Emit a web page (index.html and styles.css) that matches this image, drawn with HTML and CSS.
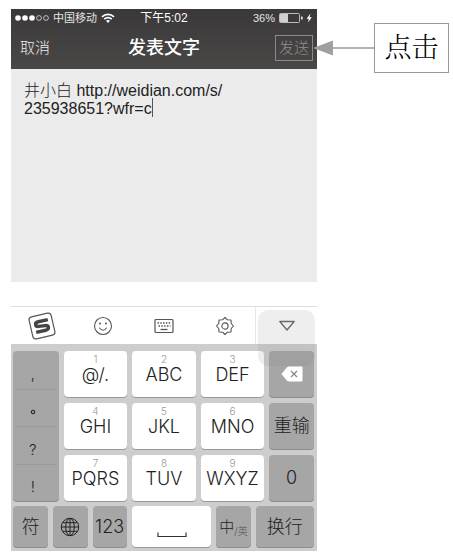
FILE: index.html
```html
<!DOCTYPE html>
<html lang="zh-CN">
<head>
    <meta charset="UTF-8">
    <meta name="viewport" content="width=device-width, initial-scale=1.0">
    <title>发表文字</title>
    <link rel="stylesheet" href="styles.css">
</head>
<body>

<div class="figure">
    <div class="phone">
        <header class="header">
            <!-- Status bar -->
            <div class="status">
                <div class="status-left">
                    <svg class="signal" width="34" height="8" viewBox="0 0 34 8">
                        <g fill="#fff">
                            <circle cx="3" cy="4" r="2.8"/>
                            <circle cx="10" cy="4" r="2.8"/>
                            <circle cx="17" cy="4" r="2.8"/>
                        </g>
                        <g fill="none" stroke="#ddd" stroke-width="0.8">
                            <circle cx="24" cy="4" r="2.4"/>
                            <circle cx="31" cy="4" r="2.4"/>
                        </g>
                    </svg>
                    <span>中国移动</span>
                    <svg width="14" height="10" viewBox="0 0 14 10">
                        <g fill="none" stroke="#fff" stroke-width="1.7">
                            <path d="M1 3.8a8.6 8.6 0 0 1 12 0"/>
                            <path d="M3.3 6.2a5.3 5.3 0 0 1 7.4 0"/>
                        </g>
                        <path d="M5 7.8a3 3 0 0 1 4 0L7 10z" fill="#fff"/>
                    </svg>
                </div>
                <span class="time">下午5:02</span>
                <div class="status-right">
                    <span>36%</span>
                    <svg width="34" height="10" viewBox="0 0 34 10">
                        <rect x="0.5" y="0.5" width="20" height="9" rx="1" fill="none" stroke="#bbb"/>
                        <rect x="1" y="1" width="8" height="8" fill="#d0d0d0"/>
                        <path d="M22 3.2q2 .3 2 1.8t-2 1.8z" fill="#ddd"/>
                        <path d="M31.5 0.5L27.6 5.8h2.2L29 9.5l3.8-5.2h-2.3z" fill="#fff"/>
                    </svg>
                </div>
            </div>
            <!-- Title bar -->
            <div class="nav">
                <button class="cancel" type="button">取消</button>
                <h1>发表文字</h1>
                <button class="send" type="button">发送</button>
            </div>
        </header>

        <div class="editor">
            <textarea class="text" aria-label="发表文字" spellcheck="false">井小白 http://weidian.com/s/
235938651?wfr=c</textarea>
            <span class="caret"></span>
        </div>

        <!-- Input method toolbar -->
        <div class="toolbar">
            <button type="button" aria-label="搜狗">
                <svg width="28" height="28" viewBox="0 0 26 26">
                    <g transform="rotate(-13 13 13)">
                        <rect x="2.5" y="2.5" width="21" height="21" rx="3" fill="#fff" stroke="#555" stroke-width="1.1"/>
                        <path d="M19.6 8.4H10.5C6.6 8.4 6.6 12.4 10 12.7L16 13.3C19.4 13.7 19.4 17.6 15.5 17.6H6.4" fill="none" stroke="#444" stroke-width="3.2"/>
                    </g>
                </svg>
            </button>
            <button type="button" aria-label="表情">
                <svg width="20" height="20" viewBox="0 0 20 20">
                    <circle cx="10" cy="10" r="8.5" fill="none" stroke="#555" stroke-width="1.1"/>
                    <circle cx="7" cy="7.5" r="1" fill="#555"/>
                    <circle cx="13" cy="7.5" r="1" fill="#555"/>
                    <path d="M6.5 12q3.8 4.4 7 0" fill="none" stroke="#555" stroke-width="1.1" stroke-linecap="round"/>
                </svg>
            </button>
            <button type="button" aria-label="键盘">
                <svg width="20" height="16" viewBox="0 0 20 16">
                    <rect x="1" y="1.5" width="18" height="13" rx="1" fill="none" stroke="#555" stroke-width="1.2"/>
                    <path d="M3.5 5h13M4.5 8h12" fill="none" stroke="#555" stroke-width="1.4" stroke-dasharray="1.5 1.3"/>
                    <path d="M6.5 11.5h7" stroke="#555" stroke-width="1.3"/>
                </svg>
            </button>
            <button type="button" aria-label="设置">
                <svg width="20" height="20" viewBox="0 0 20 20">
                    <path d="M10 1.5L12.5 3.8 16 4 16.2 7.5 18.5 10 16.2 12.5 16 16 12.5 16.2 10 18.5 7.5 16.2 4 16 3.8 12.5 1.5 10 3.8 7.5 4 4 7.5 3.8z" fill="none" stroke="#555" stroke-width="1.1" stroke-linejoin="round"/>
                    <circle cx="10" cy="10" r="3.1" fill="none" stroke="#555" stroke-width="1.1"/>
                </svg>
            </button>
            <button class="collapse" type="button" aria-label="收起">
                <svg width="18" height="12" viewBox="0 0 18 12">
                    <path d="M1.8 1.5h14.4L9 10z" fill="none" stroke="#666" stroke-width="1.3" stroke-linejoin="round"/>
                </svg>
            </button>
        </div>

        <!-- Nine-key keyboard -->
        <div class="keyboard">
            <div class="keys">
                <div class="marks">
                    <button type="button">,</button>
                    <button type="button" aria-label="句号">
                        <svg width="6" height="6" viewBox="0 0 6 6"><circle cx="3" cy="3" r="1.7" fill="none" stroke="#222" stroke-width="1.1"/></svg>
                    </button>
                    <button type="button">?</button>
                    <button type="button">!</button>
                </div>
                <button class="key letters" type="button"><small>1</small>@/.</button>
                <button class="key letters" type="button"><small>2</small>ABC</button>
                <button class="key letters" type="button"><small>3</small>DEF</button>
                <button class="key dark" type="button" aria-label="删除">
                    <svg width="22" height="16" viewBox="0 0 22 16">
                        <path d="M0.5 8L6 1.2Q7 .5 8 .5H20.5Q21.5 .5 21.5 1.5V14.5Q21.5 15.5 20.5 15.5H8Q7 15.5 6 14.8z" fill="#fff"/>
                        <path d="M10 5l6 6M16 5l-6 6" stroke="#888" stroke-width="1.3"/>
                    </svg>
                </button>
                <button class="key letters" type="button"><small>4</small>GHI</button>
                <button class="key letters" type="button"><small>5</small>JKL</button>
                <button class="key letters" type="button"><small>6</small>MNO</button>
                <button class="key dark" type="button">重输</button>
                <button class="key letters" type="button"><small>7</small>PQRS</button>
                <button class="key letters" type="button"><small>8</small>TUV</button>
                <button class="key letters" type="button"><small>9</small>WXYZ</button>
                <button class="key dark" type="button">0</button>
            </div>
            <div class="keys-bottom">
                <button class="key dark" type="button">符</button>
                <button class="key dark" type="button" aria-label="切换键盘">
                    <svg width="20" height="20" viewBox="0 0 20 20">
                        <g fill="none" stroke="#222" stroke-width="1">
                            <circle cx="10" cy="10" r="8.7"/>
                            <ellipse cx="10" cy="10" rx="4.3" ry="8.7"/>
                            <path d="M10 1.3v17.4M1.3 10h17.4M2.8 5.7h14.4M2.8 14.3h14.4"/>
                        </g>
                    </svg>
                </button>
                <button class="key dark" type="button">123</button>
                <button class="key space" type="button" aria-label="空格">
                    <svg width="30" height="6" viewBox="0 0 30 6">
                        <path d="M1 0.5v4h28v-4" fill="none" stroke="#333" stroke-width="1.2"/>
                    </svg>
                </button>
                <button class="key dark lang" type="button">中<span>/英</span></button>
                <button class="key dark" type="button">换行</button>
            </div>
        </div>
    </div>

    <!-- Callout that points at the send button -->
    <div class="callout">
        <svg class="arrow" width="61" height="16" viewBox="0 0 61 16">
            <path d="M18 8h43" stroke="#999" stroke-width="1.4"/>
            <path d="M0 8L20 0.5v15z" fill="#a0a0a0"/>
        </svg>
        <div class="callout-label">点击</div>
    </div>
</div>

</body>
</html>
```

FILE: styles.css
```css
* {
    box-sizing: border-box;
}
body {
    margin: 0;
    padding: 9px 4px 9px 11px;
    background-color: #fff;
    font-family: "Liberation Sans", "Noto Sans CJK SC", sans-serif;
}
button {
    margin: 0;
    padding: 0;
    border: none;
    background: none;
    font: inherit;
    color: inherit;
    cursor: pointer;
}
svg {
    display: block;
}
.figure {
    display: flex;
    align-items: flex-start;
}
.phone {
    flex: 1;
    min-width: 0;
}

/* Header */
.header {
    height: 60px;
    background: linear-gradient(#3a3838, #4a4747);
    color: #fff;
}
.status {
    display: grid;
    grid-template-columns: 1fr auto 1fr;
    align-items: center;
    height: 18px;
    padding: 0 4px;
    font-size: 11px;
    line-height: 18px;
}
.status-left,
.status-right {
    display: flex;
    align-items: center;
    gap: 4px;
    color: #e4e4e4;
}
.status-right {
    justify-content: flex-end;
}
.time {
    font-size: 12px;
}
.nav {
    display: grid;
    grid-template-columns: 1fr auto 1fr;
    align-items: center;
    height: 42px;
    padding: 0 4px;
}
.nav h1 {
    margin: 0;
    font-size: 18px;
    font-weight: 500;
    line-height: 24px;
}
.nav button {
    font-size: 15px;
    font-weight: 300;
    line-height: 22px;
}
.nav .cancel {
    justify-self: start;
    margin-left: 5px;
    color: #eee;
}
.nav .send {
    justify-self: end;
    width: 38px;
    height: 26px;
    border: 1px solid #8a8888;
    color: #8f8d8d;
}

/* Text */
.editor {
    position: relative;
    height: 213px;
    background-color: #ebebeb;
}
.text {
    display: block;
    width: 100%;
    height: 100%;
    padding: 13px;
    border: none;
    outline: none;
    resize: none;
    background: none;
    font-family: inherit;
    font-size: 16px;
    font-weight: 300;
    line-height: 18px;
    color: #222;
    overflow: hidden;
    white-space: pre-wrap;
}
.caret {
    position: absolute;
    left: 141px;
    top: 29px;
    width: 1px;
    height: 19px;
    background-color: #555;
}

/* Toolbar */
.toolbar {
    display: grid;
    grid-template-columns: repeat(4, 61fr) 62fr;
    height: 38px;
    margin-top: 24px;
    border-top: 1px solid #ddd;
}
.toolbar button {
    display: flex;
    align-items: center;
    justify-content: center;
}
.toolbar .collapse {
    position: relative;
    border-left: 1px solid #e8e8e8;
}
/* Translucent assistive button, floats over the toolbar and the keys */
.collapse::after {
    content: "";
    position: absolute;
    top: 3px;
    left: 2px;
    right: 2px;
    height: 56px;
    border-radius: 10px;
    background-color: rgba(120, 120, 120, 0.13);
}

/* Keyboard */
.keyboard {
    padding: 7px 3px 4px 2px;
    background-color: #cdcdcd;
    font-family: Inter, "Noto Sans CJK SC", sans-serif;
    font-size: 18px;
    font-weight: 300;
    color: #222;
}
.keys {
    display: grid;
    grid-template-columns: 46fr 64fr 64fr 64fr 45fr;
    grid-template-rows: repeat(3, 46px);
    gap: 6px 5px;
}
.marks {
    grid-row: span 3;
    display: grid;
    grid-template-rows: repeat(4, 1fr);
    border-radius: 4px;
    background-color: #a6a6a6;
    box-shadow: 0 1px 0 #8c8c8c;
    font-size: 15px;
}
.marks button {
    display: flex;
    align-items: center;
    justify-content: center;
    padding: 8px 6px 0 0;
    margin: 0 3px;
}
.marks button + button {
    border-top: 1px solid #9b9b9b;
}
.key {
    display: flex;
    flex-direction: column;
    align-items: center;
    justify-content: center;
    border-radius: 4px;
    background-color: #fff;
    box-shadow: 0 1px 0 #999;
    line-height: 22px;
    white-space: nowrap;
}
.key.letters {
    padding-bottom: 8px;
}
.key small {
    font-size: 10px;
    line-height: 10px;
    color: #999;
}
.key.dark {
    background-color: #a6a6a6;
    box-shadow: 0 1px 0 #8c8c8c;
}
.keys-bottom {
    display: grid;
    grid-template-columns: 35fr 34fr 34fr 79fr 34fr 58fr;
    grid-template-rows: 41px;
    gap: 5px;
    margin-top: 5px;
}
.key.space {
    padding-top: 16px;
}
.key.lang {
    flex-direction: row;
    font-size: 15px;
}
.lang span {
    padding-top: 8px;
    font-size: 10px;
    color: #555;
}

/* Callout */
.callout {
    display: flex;
    align-items: center;
    margin: 14px 0 0 -4px;
}
.callout-label {
    width: 75px;
    padding: 6px 0;
    border: 1px solid #999;
    font-family: "Liberation Serif", "Noto Serif CJK SC", "Noto Sans CJK SC", serif;
    font-size: 27px;
    font-weight: 300;
    line-height: 36px;
    text-align: center;
    color: #000;
}
```
